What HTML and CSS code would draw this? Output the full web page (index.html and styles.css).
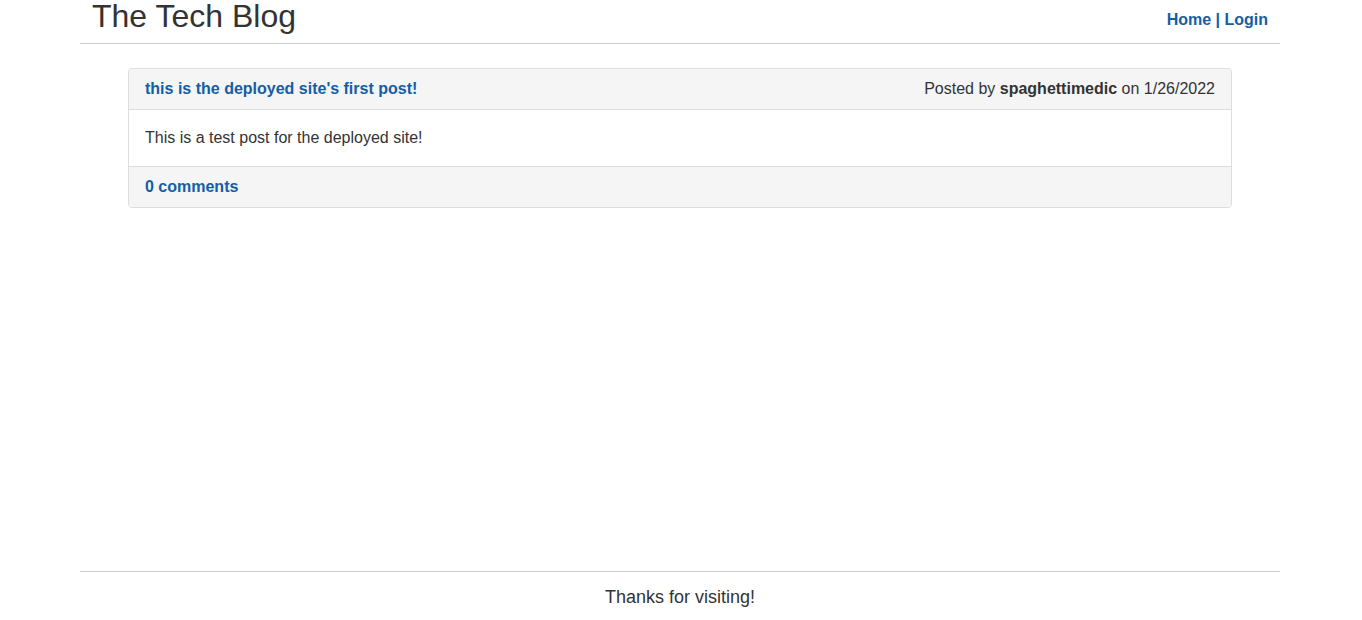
FILE: index.html
```html
<!DOCTYPE html>
<html lang="en">
<head>
<meta charset="utf-8">
<title>The Tech Blog</title>
<link rel="stylesheet" href="styles.css">
</head>
<body>
<div class="page">
  <header class="site-header">
    <h1 class="site-title">The Tech Blog</h1>
    <nav class="site-nav"><a href="#">Home</a> | <a href="#">Login</a></nav>
  </header>
  <main class="main">
    <article class="post">
      <div class="post-heading">
        <a class="post-title" href="#">this is the deployed site's first post!</a>
        <span class="post-meta">Posted by <strong>spaghettimedic</strong> on 1/26/2022</span>
      </div>
      <div class="post-body">This is a test post for the deployed site!</div>
      <div class="post-footer"><a class="post-comments" href="#">0 comments</a></div>
    </article>
  </main>
  <footer class="site-footer">Thanks for visiting!</footer>
</div>
</body>
</html>
```
FILE: styles.css
```css
* { box-sizing: border-box; }
html, body { margin: 0; padding: 0; }
body {
  font-family: "Liberation Sans", Arial, sans-serif;
  font-size: 16px;
  color: #333;
  background: #fff;
}
a { color: #135ea4; text-decoration: none; }
.page {
  width: 1200px;
  margin: 0 auto 0 80px;
  min-height: 620px;
  display: flex;
  flex-direction: column;
}
.site-header {
  display: flex;
  justify-content: space-between;
  align-items: flex-start;
  padding: 0 12px 0 12px;
  height: 44px;
  border-bottom: 1px solid #ccc;
}
.site-title {
  margin: 0;
  font-size: 32px;
  font-weight: normal;
  line-height: 33px;
  color: #333;
}
.site-nav {
  padding-top: 9px;
  font-weight: bold;
  line-height: 22px;
  color: #135ea4;
}
.main {
  flex: 1;
  padding: 24px 48px;
}
.post {
  border: 1px solid #ddd;
  border-radius: 4px;
  overflow: hidden;
}
.post-heading {
  display: flex;
  justify-content: space-between;
  background: #f5f5f5;
  padding: 9px 16px;
  line-height: 22px;
  border-bottom: 1px solid #ddd;
}
.post-title { font-weight: bold; }
.post-body {
  padding: 17px 16px;
  line-height: 22px;
  border-bottom: 1px solid #ddd;
}
.post-footer {
  background: #f5f5f5;
  padding: 9px 16px;
  line-height: 22px;
}
.post-comments { font-weight: bold; }
.site-footer {
  border-top: 1px solid #ccc;
  text-align: center;
  font-size: 18px;
  line-height: 26px;
  padding: 12px 0 10px;
}
```
